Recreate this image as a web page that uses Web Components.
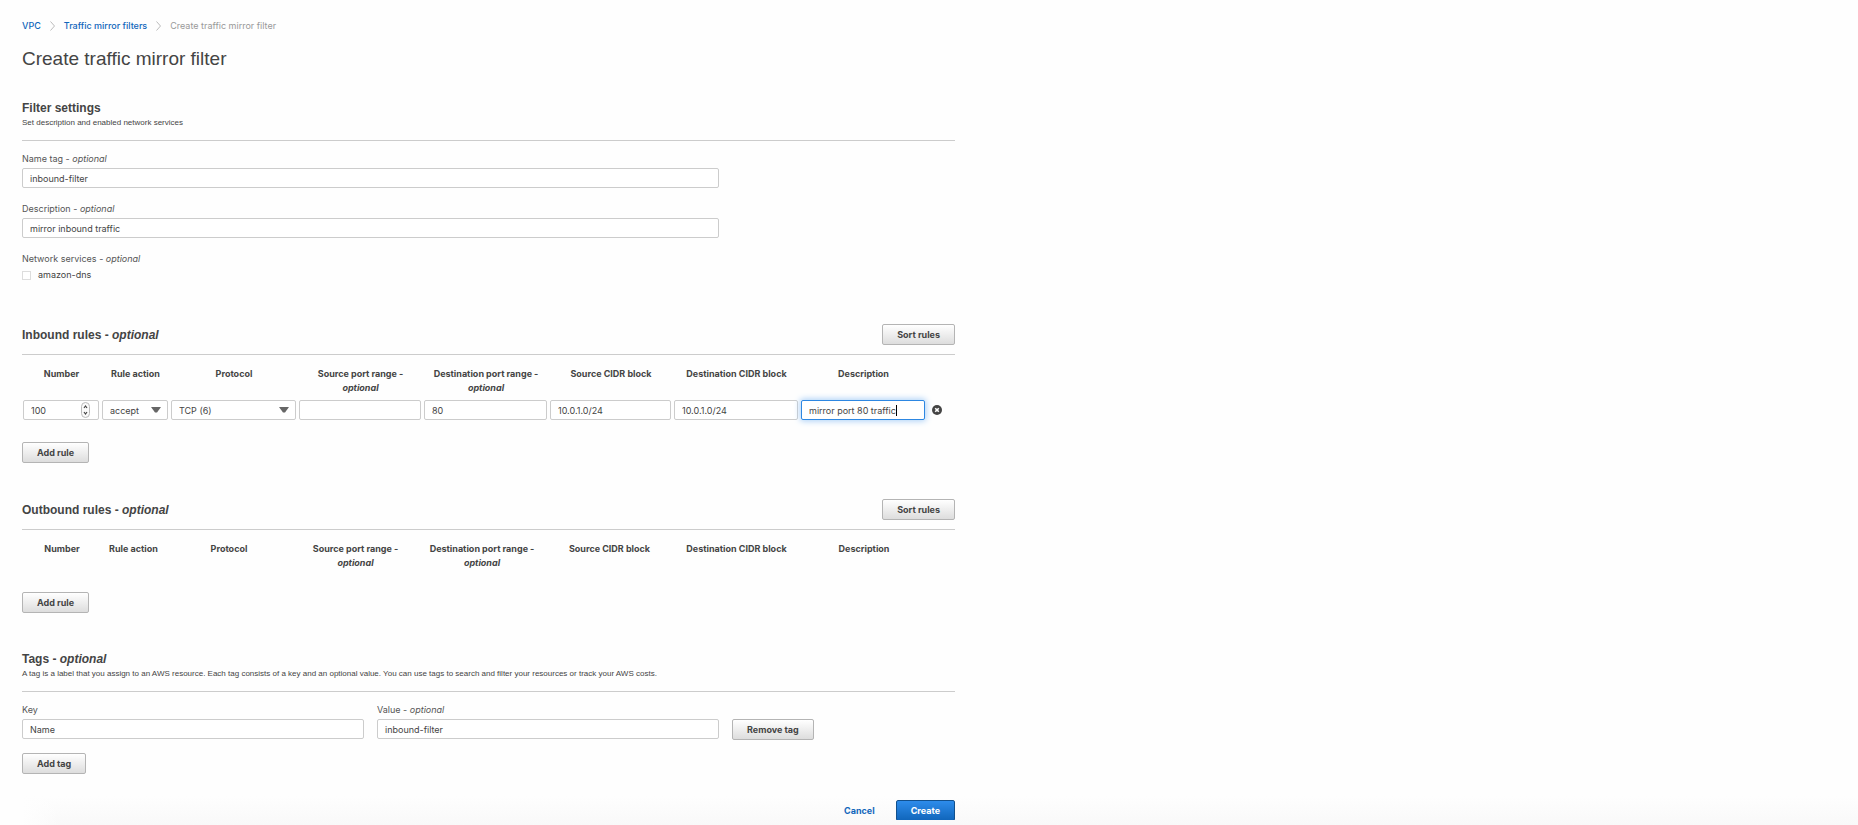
<!DOCTYPE html>
<html lang="en">
<head>
<meta charset="utf-8">
<title>Create traffic mirror filter</title>
<style>
  html, body { margin: 0; background: #fefefe; }
  body { font: 9px/14px Inter, "Liberation Sans", sans-serif; color: #444; overflow-x: hidden; }
</style>
</head>
<body>
<mirror-page></mirror-page>
<script>
const define = (name, html, setup) => {
  const template = document.createElement('template');
  template.innerHTML = `<style>*{box-sizing:border-box} :host{display:block}</style>` + html;
  customElements.define(name, class extends HTMLElement {
    constructor() {
      super();
      this.attachShadow({ mode: 'open' }).append(template.content.cloneNode(true));
    }
    connectedCallback() { if (setup) setup(this, this.shadowRoot); }
  });
};

define('app-button', `
<style>
  :host { display: inline-block; }
  button { display: block; height: 21px; padding: 0 14px; border: 1px solid #b4b4b4; border-radius: 2px;
    background: linear-gradient(#fff, #ddd); color: #444; font: bold 9px/19px Inter, "Liberation Sans", sans-serif; white-space: nowrap; }
  :host([primary]) button { border-color: #12508c; background: linear-gradient(#2d8ceb, #1166bb); color: #fff; }
</style>
<button type="button"><slot></slot></button>`);

define('bread-crumbs', `
<style>
  nav { display: flex; align-items: center; gap: 9px; }
  a { color: #1166bb; text-decoration: none; font-weight: 500; }
  span { color: #999; }
  svg { display: block; width: 5px; height: 10px; }
</style>
<nav aria-label="Breadcrumb">
  <a href="#vpc">VPC</a>
  <svg viewBox="0 0 5 10" fill="none" stroke="#bbb"><path d="M.5.5 4.5 5 .5 9.5"/></svg>
  <a href="#filters">Traffic mirror filters</a>
  <svg viewBox="0 0 5 10" fill="none" stroke="#bbb"><path d="M.5.5 4.5 5 .5 9.5"/></svg>
  <span aria-current="page">Create traffic mirror filter</span>
</nav>`);

define('section-head', `
<style>
  :host { border-bottom: 1px solid #ccc; }
  header { display: flex; align-items: center; justify-content: space-between; min-height: 21px; padding-bottom: 9px; box-sizing: content-box; }
  h2 { margin: 0; font: bold 12px/16px "Liberation Sans", Arial, sans-serif; }
  p { margin: 0; font: 8px/14px "Liberation Sans", Arial, sans-serif; color: #444; }
  :host([described]) header { min-height: 16px; padding: 0; }
  :host([described]) p { padding-bottom: 10px; }
</style>
<header><h2><slot></slot></h2><slot name="action"></slot></header>
<p><slot name="description"></slot></p>`,
(host, root) => { if (!host.hasAttribute('described')) root.querySelector('p').remove(); });

define('text-field', `
<style>
  label { display: block; height: 16px; line-height: 14px; color: #555; }
  .box { position: relative; }
  input { display: block; width: 100%; height: 20px; margin: 0; padding: 0 7px; border: 1px solid #ccc; border-radius: 2px;
    background: #fff; color: #444; font: inherit; outline: none; appearance: textfield; }
  input::-webkit-inner-spin-button { display: none; }
  :host([active]) input { border-color: #2d87e2; box-shadow: 0 0 6px 1px #a8cff7; caret-color: transparent; }
  i.caret { position: absolute; top: 5px; width: 1px; height: 11px; background: #000; }
  svg { position: absolute; top: 2px; right: 9px; width: 9px; height: 16px; }
</style>
<label for="f"><slot></slot></label>
<div class="box"><input id="f" type="text"></div>`,
(host, root) => {
  const input = root.querySelector('input');
  const box = root.querySelector('.box');
  if (host.hasAttribute('label')) {
    root.querySelector('label').remove();
    input.setAttribute('aria-label', host.getAttribute('label'));
  }
  if (host.hasAttribute('stepper')) {
    input.type = 'number';
    box.insertAdjacentHTML('beforeend', `<svg viewBox="0 0 9 16" fill="none"><rect x=".5" y=".5" width="8" height="15" rx="4" stroke="#bbb" fill="#fafafa"/><path d="M3 6 4.5 4 6 6M3 10 4.5 12 6 10" stroke="#444" stroke-width="1.2"/></svg>`);
  }
  input.value = host.getAttribute('value') || '';
  if (host.hasAttribute('active')) {
    const pen = document.createElement('canvas').getContext('2d');
    pen.font = '9px Inter';
    const caret = document.createElement('i');
    caret.className = 'caret';
    caret.style.left = 8 + Math.round(pen.measureText(input.value).width) + 'px';
    box.append(caret);
  }
});

define('select-field', `
<style>
  :host { position: relative; }
  select { display: block; width: 100%; height: 20px; margin: 0; padding: 1px 18px 0 7px; border: 1px solid #ccc; border-radius: 2px;
    background: #fff; color: #444; font: inherit; appearance: none; }
  svg { position: absolute; top: 7px; right: 7px; width: 10px; height: 6px; pointer-events: none; }
</style>
<select><option></option></select>
<svg viewBox="0 0 10 6"><path d="M0 0h10L6 5.5H4z" fill="#666"/></svg>`,
(host, root) => {
  root.querySelector('select').setAttribute('aria-label', host.getAttribute('label'));
  root.querySelector('option').textContent = host.getAttribute('value');
});

define('check-field', `
<style>
  label { display: flex; align-items: center; gap: 7px; height: 14px; }
  input { appearance: none; width: 9px; height: 9px; margin: 0; border: 1px solid #ddd; background: #fff; }
</style>
<label><input type="checkbox"><slot></slot></label>`);

define('rules-table', `
<style>
  table { width: 100%; table-layout: fixed; border-collapse: collapse; }
  th { height: 45px; padding: 12px 0 5px; vertical-align: top; font-weight: bold; line-height: 14px; }
  td { padding: 0 2px 0 1px; height: 20px; }
  button { display: block; width: 10px; height: 10px; margin: 0 0 0 4px; padding: 0; border: 0; background: none; }
  svg { display: block; }
</style>
<table>
  <colgroup></colgroup>
  <thead><tr>
    <th scope="col">Number</th><th scope="col">Rule action</th><th scope="col">Protocol</th>
    <th scope="col">Source port range -<br><em>optional</em></th><th scope="col">Destination port range -<br><em>optional</em></th>
    <th scope="col">Source CIDR block</th><th scope="col">Destination CIDR block</th><th scope="col">Description</th><td></td>
  </tr></thead>
  <tbody></tbody>
</table>`,
(host, root) => {
  const filled = host.hasAttribute('filled');
  const widths = filled ? [79, 69, 128, 125, 126, 124, 127, 127, 28] : [80, 63, 128, 125, 128, 127, 127, 128, 27];
  root.querySelector('colgroup').innerHTML = widths.map(w => `<col style="width:${w}px">`).join('');
  if (filled) root.querySelector('tbody').innerHTML = `<tr>
    <td><text-field stepper label="Number" value="100"></text-field></td>
    <td><select-field label="Rule action" value="accept"></select-field></td>
    <td><select-field label="Protocol" value="TCP (6)"></select-field></td>
    <td><text-field label="Source port range"></text-field></td>
    <td><text-field label="Destination port range" value="80"></text-field></td>
    <td><text-field label="Source CIDR block" value="10.0.1.0/24"></text-field></td>
    <td><text-field label="Destination CIDR block" value="10.0.1.0/24"></text-field></td>
    <td><text-field active label="Description" value="mirror port 80 traffic"></text-field></td>
    <td><button type="button" aria-label="Remove rule"><svg viewBox="0 0 10 10" width="10" height="10"><circle cx="5" cy="5" r="5" fill="#444"/><path d="m3.2 3.2 3.6 3.6m0-3.6L3.2 6.8" stroke="#fff" stroke-width="1.6"/></svg></button></td>
  </tr>`;
});

define('tag-editor', `
<style>
  :host { display: grid; grid-template-columns: 342fr 342fr 223fr; column-gap: 13px; align-items: end; }
  app-button { height: 20px; }
</style>
<text-field value="Name">Key</text-field>
<text-field value="inbound-filter">Value - <em>optional</em></text-field>
<app-button>Remove tag</app-button>`);

define('form-actions', `
<style>
  :host { background: linear-gradient(90deg, #fefefe 22px, #fefefe00 60px), linear-gradient(#fefefe, #f9f9f9); margin-top: 22px; padding: 4px 22px 5px; }
  div { display: flex; justify-content: flex-end; align-items: flex-start; gap: 21px; max-width: 933px; height: 20px; overflow: hidden; }
  a { color: #1166bb; font-weight: bold; line-height: 21px; text-decoration: none; }
</style>
<div><a href="#cancel">Cancel</a><app-button primary>Create</app-button></div>`);

define('mirror-page', `
<style>
  main { max-width: 977px; padding: 19px 22px 0; }
  h1 { margin: 14px 0 0; font: 19px/24px "Liberation Sans", Arial, sans-serif; }
  .fields { display: grid; grid-template-columns: 342fr 342fr 223fr; gap: 14px 13px; padding-top: 11px; }
  .fields > * { grid-column: span 2; }
  .legend { height: 16px; color: #555; }
  .settings { margin-top: 29px; }
  .inbound { margin-top: 42px; }
  .outbound { margin-top: 36px; }
  .tags { margin-top: 38px; }
  .add { margin-top: 22px; }
  .outbound .add { margin-top: 17px; }
  .tags .add { margin-top: 14px; }
  tag-editor { margin-top: 11px; }
</style>
<main>
  <bread-crumbs></bread-crumbs>
  <h1>Create traffic mirror filter</h1>
  <section class="settings">
    <section-head described>Filter settings<span slot="description">Set description and enabled network services</span></section-head>
    <div class="fields">
      <text-field value="inbound-filter">Name tag - <em>optional</em></text-field>
      <text-field value="mirror inbound traffic">Description - <em>optional</em></text-field>
      <div role="group" aria-label="Network services"><div class="legend">Network services - <em>optional</em></div><check-field>amazon-dns</check-field></div>
    </div>
  </section>
  <section class="inbound">
    <section-head>Inbound rules - <em>optional</em><app-button slot="action">Sort rules</app-button></section-head>
    <rules-table filled></rules-table>
    <app-button class="add">Add rule</app-button>
  </section>
  <section class="outbound">
    <section-head>Outbound rules - <em>optional</em><app-button slot="action">Sort rules</app-button></section-head>
    <rules-table></rules-table>
    <app-button class="add">Add rule</app-button>
  </section>
  <section class="tags">
    <section-head described>Tags - <em>optional</em><span slot="description">A tag is a label that you assign to an AWS resource. Each tag consists of a key and an optional value. You can use tags to search and filter your resources or track your AWS costs.</span></section-head>
    <tag-editor></tag-editor>
    <app-button class="add">Add tag</app-button>
  </section>
</main>
<form-actions></form-actions>`);
</script>
</body>
</html>
